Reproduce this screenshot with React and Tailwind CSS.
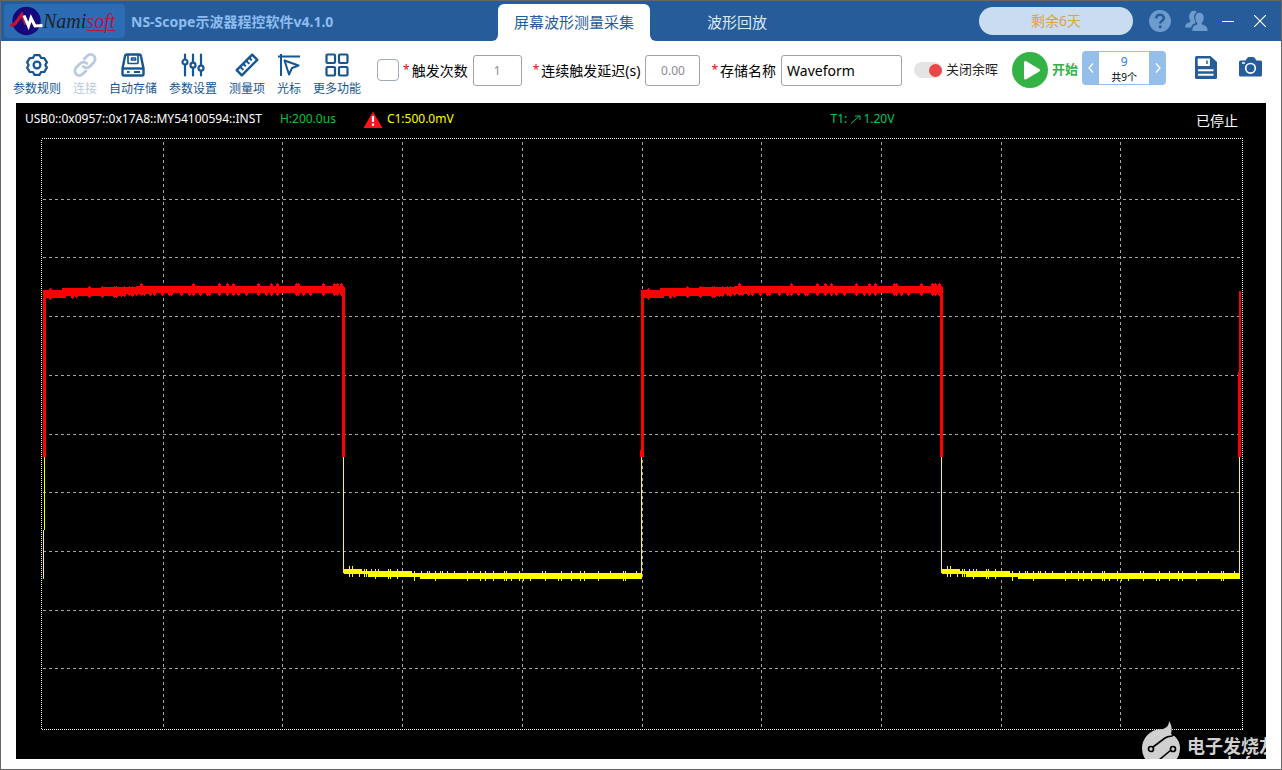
import React from 'react';

const GearIcon = () => (
  <svg width="24" height="24" viewBox="0 0 24 24" fill="none" stroke="currentColor" strokeWidth="2.2" strokeLinejoin="round">
    <path d="M9.4 2.2h5.2l1.5 2.8 3.2.1 2.6 4.3-1.6 2.6 1.6 2.6-2.6 4.3-3.2.1-1.5 2.8H9.4L7.9 19l-3.2-.1-2.6-4.3L3.7 12 2.1 9.4l2.6-4.3L7.9 5z" />
    <circle cx="12" cy="12" r="3.4" />
  </svg>
);

const LinkIcon = () => (
  <svg width="24" height="24" viewBox="0 0 24 24" fill="none" stroke="currentColor" strokeWidth="2.8" strokeLinecap="round">
    <path d="M10.2 13.4a4.6 4.6 0 0 0 6.6 0l4-4a4.6 4.6 0 0 0-6.6-6.5l-3 3" />
    <path d="M13.8 10.6a4.6 4.6 0 0 0-6.6 0l-4 4a4.6 4.6 0 0 0 6.6 6.5l3-3" />
  </svg>
);

const DriveIcon = () => (
  <svg width="24" height="24" viewBox="0 0 24 24" fill="none" stroke="currentColor" strokeWidth="2.4" strokeLinejoin="round">
    <path d="M1.5 15.5 4 3.2Q4.3 1.5 6 1.5h12q1.7 0 2 1.7l2.5 12.3v5.500q0 1.500-1.500 1.500H3q-1.500 0-1.500-1.500z" />
    <path d="M1.5 15.5h21" />
    <path d="M7 2v7.5q0 1 1 1h8q1 0 1-1V2M10.5 5h4v2h-4z" strokeWidth="1.7" />
    <path d="M6 19h2.5M13 19h6" strokeWidth="1.9" />
  </svg>
);

const SlidersIcon = () => (
  <svg width="24" height="24" viewBox="0 0 24 24" fill="none" stroke="currentColor" strokeWidth="2.2" strokeLinecap="round">
    <path d="M4 1.5V6M4 12v10.5M12 1.5v8M12 15.5v7M20 1.5V12M20 18.5v4" />
    <circle cx="4" cy="9" r="2.5" />
    <circle cx="12" cy="12.2" r="2.5" />
    <circle cx="20" cy="15.2" r="2.5" />
  </svg>
);

const RulerIcon = () => (
  <svg width="24" height="24" viewBox="0 0 24 24" fill="none" stroke="currentColor" strokeWidth="2.4" strokeLinejoin="round" strokeLinecap="round">
    <path d="M17.2 1.7 22.3 6.8 6.8 22.3 1.7 17.2z" />
    <path d="m5.2 13.8 2.6 2.6M8.2 10.8l2 2M11.2 7.8l2.6 2.6M14.2 4.8l2 2" strokeWidth="2" />
  </svg>
);

const CursorIcon = () => (
  <svg width="24" height="24" viewBox="0 0 24 24" fill="none" stroke="currentColor" strokeWidth="2" strokeLinejoin="round">
    <path d="M1 3.5h22M4 1v22" />
    <path d="m7.500 7.500 14 5-6.500 2.500-3 6.500z" />
  </svg>
);

const GridIcon = () => (
  <svg width="24" height="24" viewBox="0 0 24 24" fill="none" stroke="currentColor" strokeWidth="2.2">
    <rect x="1.5" y="1.5" width="8.5" height="8.5" rx="1" />
    <rect x="14" y="1.5" width="8.5" height="8.5" rx="1" />
    <rect x="1.5" y="14" width="8.5" height="8.5" rx="1" />
    <rect x="14" y="14" width="8.5" height="8.5" rx="1" />
  </svg>
);

const tools = [
  { icon: <GearIcon />, label: '参数规则' },
  { icon: <LinkIcon />, label: '连接', disabled: true },
  { icon: <DriveIcon />, label: '自动存储' },
  { icon: <SlidersIcon />, label: '参数设置' },
  { icon: <RulerIcon />, label: '测量项' },
  { icon: <CursorIcon />, label: '光标' },
  { icon: <GridIcon />, label: '更多功能' },
];

const Logo = () => (
  <div className="flex h-[34px] w-[121px] shrink-0 items-center rounded bg-[#2c6cb5] pl-1.5">
    <svg className="shrink-0" width="33" height="30" viewBox="0 0 33 30">
      <circle cx="16.5" cy="15" r="14.2" fill="#14087c" />
      <path d="M.5 20 5 17.800 11.800 8.500 16 18.500" fill="none" stroke="#c4122f" strokeWidth="3.2" />
      <path d="M14 9.500 18.500 20 21 12 25 20 32.500 19.500" fill="none" stroke="#fff" strokeWidth="3" />
    </svg>
    <span className="font-['Liberation_Serif',serif] text-[20px] leading-6 italic text-[#1d2226]">
      Nami<span className="text-[#b8163a] underline decoration-1 underline-offset-2">soft</span>
    </span>
  </div>
);

const TitleBar = () => (
  <header className="flex h-10 justify-between bg-[#265c99]">
    <div className="flex">
      <div className="flex w-[491px] items-center gap-1.5 pl-[3px]">
        <Logo />
        <h1 className="whitespace-nowrap text-[14px] font-bold text-[#8dbcf0]">NS-Scope示波器程控软件v4.1.0</h1>
      </div>
      <nav className="flex items-end">
        <span className="h-1.5 w-1.5 bg-white"><span className="block h-1.5 rounded-br-md bg-[#265c99]" /></span>
        <button className="h-[37px] w-[152px] whitespace-nowrap rounded-t-md bg-white text-[15px] text-[#265c99]">屏幕波形测量采集</button>
        <span className="h-1.5 w-1.5 bg-white"><span className="block h-1.5 rounded-bl-md bg-[#265c99]" /></span>
        <button className="h-[37px] w-[162px] whitespace-nowrap text-[15px] text-[#dbe9f8]">波形回放</button>
      </nav>
    </div>
    <div className="flex items-center pb-px pr-[15px] text-white">
      <div className="mr-4 flex h-7 w-[154px] items-center justify-center rounded-full bg-[#c9dcf1] text-[14px] text-[#dda33c]">剩余6天</div>
      <button aria-label="帮助" className="mr-3.5">
        <svg width="22" height="22" viewBox="0 0 22 22">
          <circle cx="11" cy="11" r="11" fill="#6d9bcd" />
          <path d="M7.300 8.500c0-5 7.600-4.600 7.600-.4 0 2.800-3.700 2.700-3.700 5.400" fill="none" stroke="#265c99" strokeWidth="2.5" />
          <circle cx="11.2" cy="16.7" r="1.5" fill="#265c99" />
        </svg>
      </button>
      <button aria-label="用户" className="mr-3.5">
        <svg width="23" height="22" viewBox="0 0 23 22" fill="#6d9bcd">
          <path d="M5 3.500C6 .2 10.500-.2 11.800 2.300 8.500 4 8.600 8 10 11l.5 2.300c-2.500.7-4 1.700-4.300 4.200H.3c-.3-3.200 1-4 4.200-5.200 1-.4 1.200-1.200.8-2C3.500 8.500 4 5 5 3.500z" />
          <path d="M10.300 7.500c0-3 1.800-4.700 4.200-4.700s4.200 1.700 4.200 4.700c0 2.600-.6 4-1.800 5.300-.6.9-.3 1.600.8 2 3.300 1.100 4.900 2 4.900 6.200H7.400c0-4.200 1-5.100 4.100-6.200 1-.4 1.300-1.100.6-2-1.200-1.300-1.800-2.700-1.800-5.300z" />
        </svg>
      </button>
      <button aria-label="最小化" className="mr-5">
        <svg width="12" height="12" viewBox="0 0 12 12" stroke="currentColor"><path d="M0 6.500h12" /></svg>
      </button>
      <button aria-label="关闭">
        <svg width="12" height="12" viewBox="0 0 12 12" stroke="currentColor" strokeWidth="1.2"><path d="m0 0 12 12M12 0 0 12" /></svg>
      </button>
    </div>
  </header>
);

const Field = ({ id, label, className, ...rest }) => (
  <div className="flex items-center">
    <label htmlFor={id} className="mr-[5px] flex items-center gap-0.5 whitespace-nowrap text-[14px] text-black">
      <span className="text-[12px] text-red-600">*</span>
      {label}
    </label>
    <input id={id} className={`h-[31px] rounded-[3px] border border-[#a3a3a3] bg-white outline-none ${className}`} {...rest} />
  </div>
);

const Toolbar = () => (
  <div className="flex h-[62px] items-center pl-3 pr-[19px]">
    <div className="mt-1.5 flex gap-3">
      {tools.map((tool) => (
        <button
          key={tool.label}
          disabled={tool.disabled}
          className={`flex flex-col items-center gap-1 whitespace-nowrap text-[12px] leading-4 ${tool.disabled ? 'text-[#b9cbe1]' : 'text-[#145694]'}`}
        >
          {tool.icon}
          {tool.label}
        </button>
      ))}
    </div>

    <div className="mb-1 ml-4 flex items-center">
      <input type="checkbox" aria-label="触发次数" className="mr-1 h-[22px] w-[22px] shrink-0 appearance-none rounded border border-[#9fabb8] bg-white" />
      <div className="flex items-center gap-[11px]">
        <Field id="count" label="触发次数" defaultValue="1" className="w-[49px] text-center text-[12px] text-[#8c8c8c]" />
        <Field id="delay" label="连续触发延迟(s)" defaultValue="0.00" className="w-[55px] text-center text-[12px] text-[#8c8c8c]" />
        <Field id="name" label="存储名称" defaultValue="Waveform" className="w-[121px] px-[5px] text-[14px] text-black" />
      </div>

      <label className="ml-3 flex items-center gap-1 whitespace-nowrap text-[13px] text-[#222]">
        <input
          type="checkbox"
          role="switch"
          defaultChecked
          className="flex h-4 w-[28px] appearance-none items-center justify-end rounded-full bg-[#e4e4e4] before:h-[13px] before:w-[13px] before:rounded-full before:bg-[#ee4648]"
        />
        关闭余晖
      </label>

      <button className="ml-3.5 flex items-center gap-1 whitespace-nowrap text-[13px] font-bold text-[#35b246]">
        <svg width="36" height="36" viewBox="0 0 36 36">
          <circle cx="18" cy="18" r="18" fill="#35b246" />
          <path d="M13.500 10.500v15.500L26.500 18.200z" fill="#fff" stroke="#fff" strokeWidth="3" strokeLinejoin="round" />
        </svg>
        开始
      </button>

      <div className="mb-1 ml-1 flex h-[34px] w-[84px] items-stretch rounded bg-[#94bfea] py-px">
        <button aria-label="上一个" className="flex w-[17px] items-center justify-center">
          <svg width="6" height="10" viewBox="0 0 6 10" fill="none" stroke="#fff" strokeWidth="1.3"><path d="M5 .5 1 5l4 4.500" /></svg>
        </button>
        <div className="flex flex-1 flex-col items-center justify-end bg-white">
          <span className="text-[12px] leading-4 text-[#2b7fd0]">9</span>
          <span className="text-[10px] leading-[14px] text-black">共9个</span>
        </div>
        <button aria-label="下一个" className="flex w-[17px] items-center justify-center">
          <svg width="6" height="10" viewBox="0 0 6 10" fill="none" stroke="#fff" strokeWidth="1.3"><path d="m1 .5 4 4.500-4 4.500" /></svg>
        </button>
      </div>
    </div>

    <div className="mb-2.5 ml-auto flex items-center gap-[22px]">
      <button aria-label="保存">
        <svg width="22" height="23" viewBox="0 0 22 23">
          <path d="M1.500 0h14L22 6v15.500q0 1.500-1.500 1.500h-19Q0 23 0 21.500v-20Q0 0 1.500 0z" fill="#265c99" />
          <path d="M2.700 2.500h12.200v6.700q0 .8-.8.8H3.500q-.8 0-.8-.8z" fill="#fff" />
          <path d="M11.200 4.500h1.500v3.500h-1.500z" fill="#265c99" />
          <path d="M3 13.200h15.500v2H3zM3 17.700h15.500v2H3z" fill="#fff" />
        </svg>
      </button>
      <button aria-label="截图">
        <svg width="23" height="20" viewBox="0 0 23 20">
          <path d="M1.500 3.500h5L8.500.8Q9 0 10 0h4q1 0 1.500.8l2 2.700h4Q23 3.500 23 5v13q0 1.500-1.500 1.500h-20Q0 19.500 0 18V5q0-1.500 1.500-1.500z" fill="#265c99" />
          <circle cx="11.5" cy="11.3" r="4.8" fill="none" stroke="#fff" strokeWidth="1.7" />
          <path d="M3 6h3" stroke="#fff" strokeWidth="1.5" />
        </svg>
      </button>
    </div>
  </div>
);

// Grid lines, in plot pixels
const columns = [163, 282, 402, 522, 642, 761, 881, 1001, 1120];
const rows = [199, 257, 316, 375, 434, 492, 551, 610, 668];

// Noise on the high level: [x, y, height]
const highNoise = [
  [49, 288, 12], [62, 288, 3], [65, 288, 3], [71, 288, 11], [75, 290, 8], [88, 286, 12], [101, 286, 12],
  [113, 286, 12], [115, 286, 12], [120, 288, 9], [123, 286, 11], [128, 286, 10], [131, 286, 11], [135, 286, 10],
  [140, 283, 13], [143, 286, 10], [149, 286, 10], [153, 286, 10], [161, 286, 10], [168, 286, 10], [170, 286, 10],
  [180, 286, 10], [188, 286, 10], [192, 283, 13], [199, 286, 10], [206, 286, 10], [208, 286, 10], [218, 283, 13],
  [226, 283, 13], [232, 283, 13], [237, 286, 10], [245, 286, 10], [257, 283, 13], [265, 286, 10], [270, 283, 13],
  [276, 283, 13], [295, 283, 13], [297, 283, 13], [302, 286, 10], [309, 286, 10], [322, 283, 13], [333, 283, 13],
  [336, 283, 13], [340, 283, 13],
];

// Noise on the low level: [x, y, height]
const lowNoise = [
  [349, 566, 11], [352, 566, 11], [359, 571, 6], [364, 569, 8], [366, 569, 8], [371, 569, 8], [375, 569, 10],
  [378, 569, 8], [388, 569, 10], [390, 569, 10], [397, 569, 10], [414, 571, 10], [421, 571, 8], [427, 571, 8],
  [429, 571, 8], [435, 571, 10], [440, 571, 8], [442, 571, 8], [447, 571, 8], [454, 571, 8], [467, 571, 10],
  [473, 571, 8], [480, 571, 10], [485, 571, 10], [493, 571, 10], [504, 571, 10], [506, 571, 10], [511, 573, 8],
  [519, 571, 10], [523, 573, 8], [530, 573, 8], [542, 571, 8], [545, 571, 10], [558, 573, 8], [561, 571, 10],
  [571, 571, 10], [580, 571, 10], [584, 571, 10], [598, 571, 10], [610, 571, 8], [623, 571, 10], [625, 571, 10],
  [636, 571, 8],
];

const Period = ({ shift }) => (
  <g transform={`translate(${shift} 0)`}>
    <path d="M344 569h18v2h50v2h230v6H420v-2h-52v-3h-24zM343 457h1v116h-1z" fill="#ff0" />
    {lowNoise.map(([x, y, h]) => <rect key={x} x={x} y={y} width="1" height={h} fill="#ff0" />)}
    <path d="M43 290h19v-2h42v-1h33v-1h207v171h-2V293H152v1h-30v2H66v2H46v159h-3z" fill="#f00" />
    <path d="M342 287h3v170h-3z" fill="#f00" />
    {highNoise.map(([x, y, h]) => (
      <g key={x} fill="#f00">
        <rect x={x + 1} y={y} width="1" height={h} />
        <rect x={x} y={y + 1} width="3" height={h - 2} />
      </g>
    ))}
  </g>
);

const Plot = () => (
  <svg className="ml-[25px] block h-[592px] w-[calc(100%-48px)]" viewBox="41 138 1202 592" preserveAspectRatio="none" shapeRendering="crispEdges">
    <g stroke="#a6a6a6" strokeDasharray="3 3">
      {columns.map((x) => <path key={x} d={`M${x + 0.5} 142V729`} />)}
      {rows.map((y) => <path key={y} d={`M43 ${y + 0.5}H1240`} />)}
    </g>
    <rect x="41.5" y="138.5" width="1201" height="591" fill="none" stroke="#fff" strokeDasharray="1 1" />
    <path d="M44 457h1v73h-1zM43 530h1v49h-1zM641 457h1v118h-1zM1239 457h1v118h-1z" fill="#ff0" />
    <Period shift={0} />
    <Period shift={598} />
    <path d="M1239 291h2v166h-3v-85h1zM640 450h2v7h-2z" fill="#f00" />
  </svg>
);

const Watermark = () => (
  <div className="absolute bottom-0 right-0 flex h-[40px] w-[124px] overflow-hidden text-[#d0d0d0]">
    <svg className="shrink-0" width="45" height="48" viewBox="0 0 45 48">
      <path d="M27 2c4 6 2.500 10 2 13 6 3 9 8 9 14a19 19 0 1 1-20-18.700c4 0 9-2 9-8.300z" fill="currentColor" />
      <path d="m11 28 12-9q2-1.500 7-2 2-1 2.500-4M17 41l12-10" fill="none" stroke="#000" strokeWidth="1.6" />
      <circle cx="9" cy="30" r="2.5" fill="none" stroke="#000" strokeWidth="1.7" />
      <circle cx="31" cy="30" r="2.500" fill="none" stroke="#000" strokeWidth="1.7" />
    </svg>
    <div className="whitespace-nowrap pt-4 font-bold">
      <p className="text-[18px] leading-[22px]">电子发烧友</p>
      <p className="text-[12px] leading-[10px]">www.elecfans.com</p>
    </div>
  </div>
);

const App = () => {
  return (
    <div className="flex min-h-screen flex-col border border-[#666] bg-white font-['Noto_Sans','Noto_Sans_CJK_SC',sans-serif]">
      <TitleBar />
      <Toolbar />

      {/* Scope screen */}
      <main className="relative mx-[15px] mb-2.5 flex-1 bg-black">
        <div className="grid h-[35px] grid-cols-[65%_1fr_auto] items-center whitespace-nowrap text-[12px]">
          <div className="flex items-center pb-[3px] pl-[9px]">
            <span className="mr-[18px] text-white">USB0::0x0957::0x17A8::MY54100594::INST</span>
            <span className="mr-[27px] text-[#00c832]">H:200.0us</span>
            <svg className="mr-1" width="20" height="17" viewBox="0 0 20 17">
              <path d="M10 .5 19.500 17H.5z" fill="#f8141c" />
              <path d="M10 5v6M10 12.500v2.300" stroke="#fff" strokeWidth="2.2" />
            </svg>
            <span className="text-[#ff0]">C1:500.0mV</span>
          </div>
          <span className="flex items-center pb-[3px] pl-0.5 text-[#00c864]">
            T1:&nbsp;
            <svg className="mr-0.5" width="11" height="9" viewBox="0 0 11 9" fill="none" stroke="currentColor"><path d="M1 8.500 9.500 1M5 1h5v4" /></svg>
            1.20V
          </span>
          <span className="pr-7 text-[14px] text-white">已停止</span>
        </div>
        <Plot />
        <Watermark />
      </main>
    </div>
  );
};

export default App;
